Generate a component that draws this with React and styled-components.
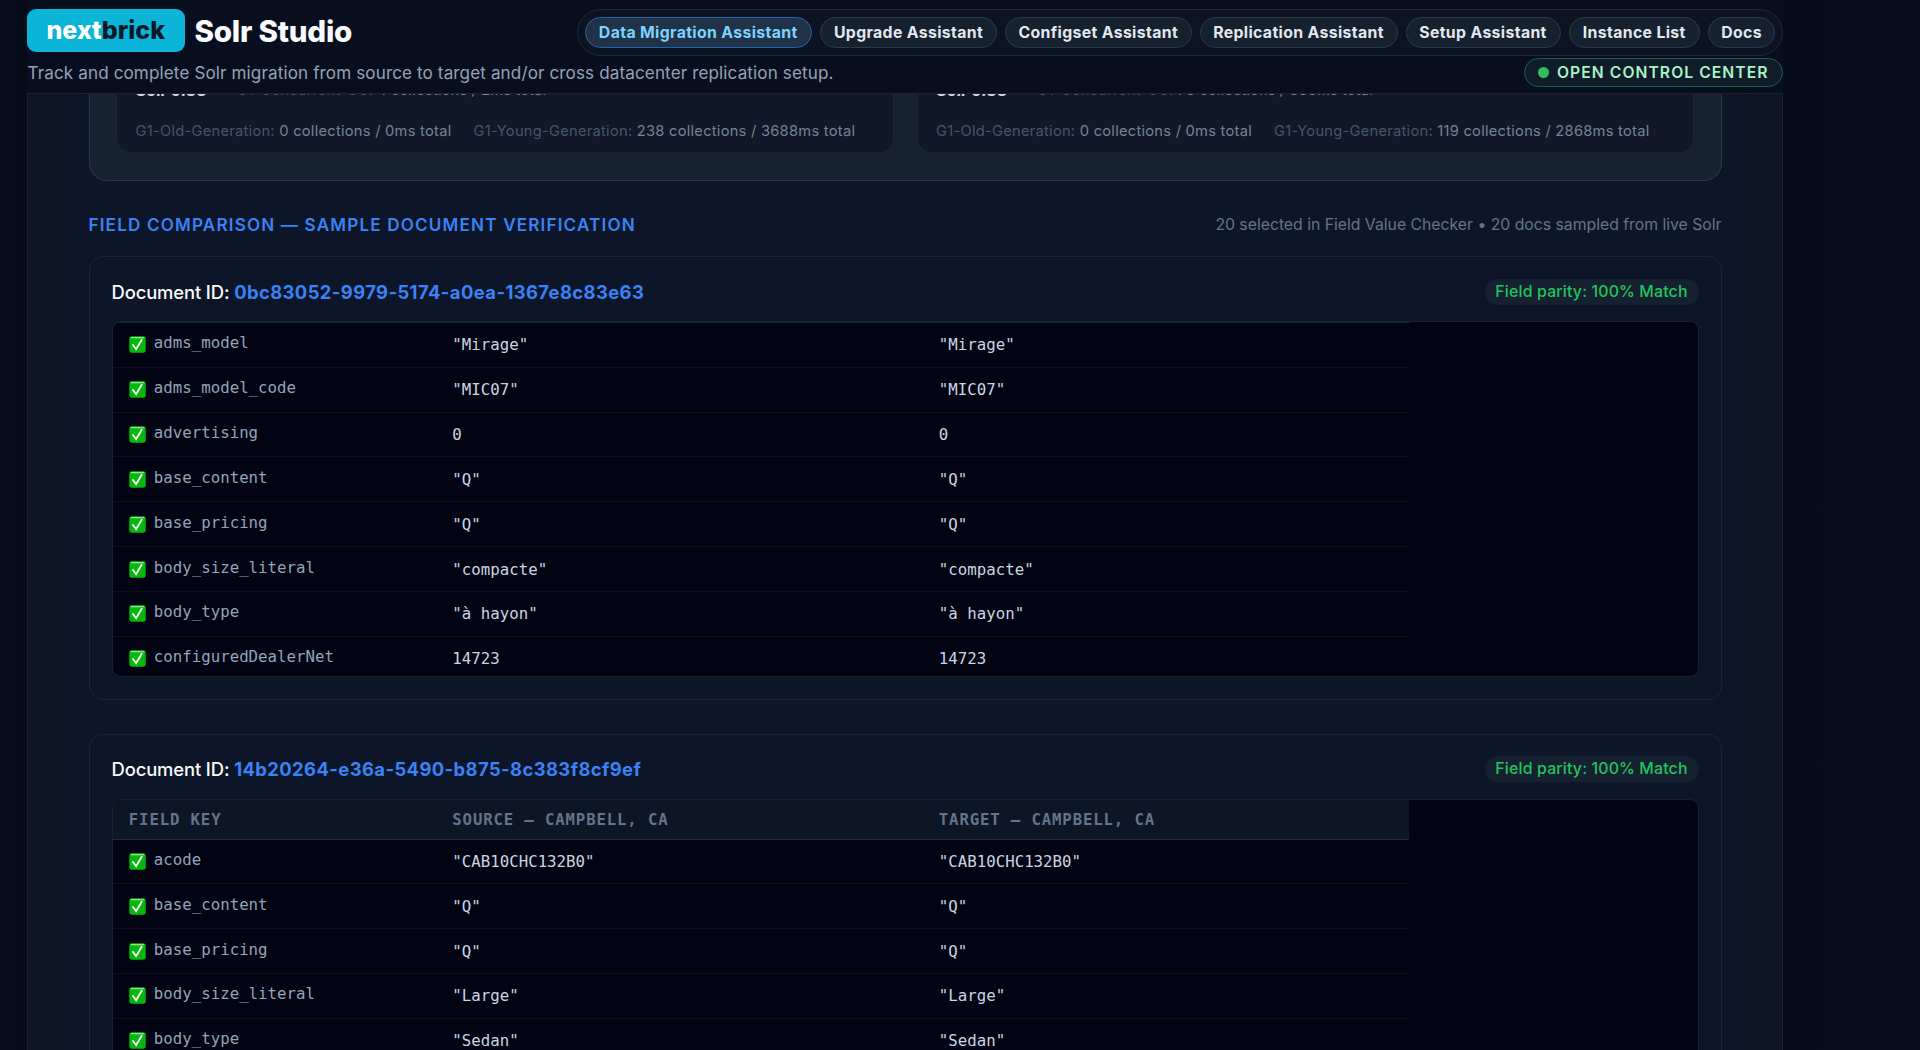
import React from 'react'
import styled, { createGlobalStyle } from 'styled-components'

const GlobalStyle = createGlobalStyle`
  * {
    box-sizing: border-box;
  }
  body {
    margin: 0;
    background: #060b17;
    font-family: Inter, 'Liberation Sans', sans-serif;
    color: #f1f5f9;
    overflow: hidden;
  }
`
const Page = styled.div`
  width: 1920px;
  height: 1050px;
  padding: 0 137px 0 27px;
  display: flex;
  flex-direction: column;
  overflow: hidden;
  background: linear-gradient(90deg, #080d1b 0, #060b18 27px, #060b18 1784px, #070c19 1830px, #070c19 100%);
`
const Header = styled.header`
  flex: none;
  height: 93px;
  padding-top: 9px;
  background: #090e1f;
`
const TopRow = styled.div`
  display: flex;
  justify-content: space-between;
  height: 46.5px;
`
const Brand = styled.div`
  display: flex;
  gap: 10px;
`
const Logo = styled.div`
  width: 157.5px;
  height: 43px;
  border-radius: 9px;
  background: #0ab5d8;
  color: #fff;
  font-size: 25px;
  font-weight: 800;
  line-height: 43px;
  text-align: center;
`
const LogoDark = styled.span`
  color: #0f172a;
`
const Title = styled.h1`
  margin: 0;
  font-size: 29.6px;
  font-weight: 800;
  line-height: 44px;
  letter-spacing: -0.25px;
  color: #f8fafc;
`
const Nav = styled.nav`
  display: flex;
  align-items: center;
  gap: 8px;
  padding: 0 7px;
  border: 1px solid #1c2a3a;
  border-radius: 24px;
  background: #0c1424;
`
const NavPill = styled.a`
  width: ${(props) => props.$width}px;
  height: 31.5px;
  line-height: 30px;
  text-align: center;
  white-space: nowrap;
  border: 1px solid ${(props) => (props.$active ? '#2563a8' : '#2a3a4b')};
  border-radius: 16px;
  background: ${(props) => (props.$active ? '#1f3248' : '#162130')};
  color: ${(props) => (props.$active ? '#7dd3fc' : '#e2e8f0')};
  font-size: 15.8px;
  font-weight: 700;
  letter-spacing: 0.36px;
`
const SubRow = styled.div`
  display: flex;
  justify-content: space-between;
  padding-top: 2.5px;
`
const Subtitle = styled.p`
  margin: 0;
  padding-left: 0.5px;
  font-size: 17.1px;
  line-height: 29px;
  letter-spacing: 0.11px;
  color: #94a3b8;
`
const ControlCenter = styled.button`
  display: flex;
  align-items: center;
  gap: 8px;
  width: 259px;
  height: 28.5px;
  padding: 0 13px;
  border: 1px solid #166540;
  border-radius: 15px;
  background: #111c2b;
  color: #a7f3c4;
  font-family: inherit;
  font-size: 15.7px;
  font-weight: 600;
  letter-spacing: 1.05px;
  white-space: nowrap;
`
const Dot = styled.span`
  flex: none;
  width: 11px;
  height: 11px;
  border-radius: 50%;
  background: #2fbf5c;
`
const Panel = styled.main`
  flex: 1;
  min-height: 0;
  overflow: hidden;
  padding: 0 60.5px;
  border: solid #1a2534;
  border-width: 1px 1px 0;
  background: linear-gradient(90deg, #0f1626 0, #0d1628 50px, #0d1628 1700px, #0f1626 100%);
`
const StatsSection = styled.section`
  display: flex;
  align-items: flex-end;
  gap: 23px;
  height: 86.5px;
  padding: 0 26.5px 27px;
  border: 1px solid #26364a;
  border-top: 0;
  border-radius: 0 0 18px 18px;
  background: #172230;
`
const StatsCard = styled.div`
  flex: 1;
  height: 58.5px;
  display: flex;
  flex-direction: column;
  justify-content: space-between;
  overflow: hidden;
  padding: 0 18.5px 10.5px;
  border: 1px solid #1a2534;
  border-top: 0;
  border-radius: 0 0 14px 14px;
  background: #101829;
`
const StatsLine = styled.div`
  display: flex;
  gap: 22px;
  font-size: 14.7px;
  line-height: 20px;
  letter-spacing: 0.25px;
  white-space: nowrap;
  color: #475569;
`
/* first line is scrolled half way under the header */
const ScrolledLine = styled(StatsLine)`
  gap: 26px;
  margin-top: -14px;
  letter-spacing: 0.12px;
`
const StatsValue = styled.span`
  color: #748397;
`
const SolrVersion = styled.strong`
  width: 75px;
  font-size: 16.5px;
  letter-spacing: -0.2px;
  color: #cbd5e1;
`
const SectionHead = styled.div`
  display: flex;
  justify-content: space-between;
  align-items: center;
  height: 75.5px;
  padding-top: 11.5px;
`
const SectionTitle = styled.h2`
  margin: 0;
  font-size: 17.1px;
  font-weight: 600;
  letter-spacing: 1.17px;
  color: #3b82f6;
`
const SectionNote = styled.span`
  font-size: 15.8px;
  letter-spacing: -0.02px;
  color: #64748b;
`
const DocCard = styled.article`
  height: 443.5px;
  margin-bottom: 34px;
  padding: 0 22px;
  border: 1px solid #1a2534;
  border-radius: 14px;
`
const DocHead = styled.div`
  display: flex;
  justify-content: space-between;
  align-items: center;
  height: 64px;
  padding-top: 5px;
`
const DocTitle = styled.h3`
  margin: 0;
  font-size: 18.4px;
  font-weight: 500;
  letter-spacing: -0.12px;
  color: #f8fafc;
`
const DocId = styled.span`
  font-weight: 700;
  letter-spacing: 0.41px;
  color: #3b82f6;
`
const Parity = styled.span`
  width: 214px;
  height: 26px;
  border-radius: 13px;
  background: #152130;
  color: #22c55e;
  font-size: 15.9px;
  font-weight: 500;
  line-height: 26px;
  letter-spacing: 0.15px;
  text-align: center;
`
const TableBox = styled.div`
  height: 356px;
  overflow: hidden;
  border: 1px solid #172231;
  border-radius: 9px;
  background: #020414;
  font-family: 'DejaVu Sans Mono', monospace;
`
const Row = styled.div`
  display: grid;
  grid-template-columns: 323.5px 486.5px 1fr;
  align-items: center;
  width: 1296.5px;
  height: 44.83px;
  padding-left: 16.3px;
  border-bottom: 1px solid #0c111f;
`
const HeadRow = styled(Row)`
  height: 40px;
  background: #0d1627;
  border-bottom: 1px solid #1b2c3c;
  color: #64748b;
  font-size: 15.7px;
  font-weight: 700;
  letter-spacing: 0.85px;
`
/* what is left of the header once the table is scrolled */
const HeadEdge = styled.div`
  width: 1296.5px;
  height: 1px;
  background: #182636;
`
const FieldKey = styled.span`
  display: flex;
  align-items: center;
  gap: 8px;
  font-size: 15.75px;
  color: #94a3b8;
`
const KeyText = styled.span`
  padding-bottom: 4px;
`
const Value = styled.span`
  font-size: 15.75px;
  color: #cbd5e1;
`

const CheckIcon = () => (
  <svg width="17" height="17" viewBox="0 0 17 17">
    <rect x="0.3" y="0.3" width="16.4" height="16.4" rx="2.6" fill="#07b80c" />
    <rect x="1.6" y="0.9" width="13.8" height="1.3" rx="0.6" fill="#8fe596" />
    <path d="M4 9l3.1 4.2 5.6-9.4" fill="none" stroke="#fff" strokeWidth="1.8" strokeLinecap="round" />
  </svg>
)

const navItems = [
  { label: 'Data Migration Assistant', width: 227.5, active: true },
  { label: 'Upgrade Assistant', width: 177 },
  { label: 'Configset Assistant', width: 186.5 },
  { label: 'Replication Assistant', width: 198 },
  { label: 'Setup Assistant', width: 155 },
  { label: 'Instance List', width: 131.5 },
  { label: 'Docs', width: 67 },
]

const stats = [
  { concurrent: '4 collections / 2ms total', old: '0 collections / 0ms total', young: '238 collections / 3688ms total' },
  { concurrent: '78 collections / 538ms total', old: '0 collections / 0ms total', young: '119 collections / 2868ms total' },
]

const documents = [
  {
    id: '0bc83052-9979-5174-a0ea-1367e8c83e63',
    fields: [
      ['adms_model', '"Mirage"'],
      ['adms_model_code', '"MIC07"'],
      ['advertising', '0'],
      ['base_content', '"Q"'],
      ['base_pricing', '"Q"'],
      ['body_size_literal', '"compacte"'],
      ['body_type', '"à hayon"'],
      ['configuredDealerNet', '14723'],
    ],
  },
  {
    id: '14b20264-e36a-5490-b875-8c383f8cf9ef',
    showHead: true,
    fields: [
      ['acode', '"CAB10CHC132B0"'],
      ['base_content', '"Q"'],
      ['base_pricing', '"Q"'],
      ['body_size_literal', '"Large"'],
      ['body_type', '"Sedan"'],
    ],
  },
]

const Document = ({ doc }) => (
  <DocCard>
    <DocHead>
      <DocTitle>Document ID: <DocId>{doc.id}</DocId></DocTitle>
      <Parity>Field parity: 100% Match</Parity>
    </DocHead>
    <TableBox>
      {doc.showHead ? (
        <HeadRow>
          <span>FIELD KEY</span>
          <span>SOURCE — CAMPBELL, CA</span>
          <span>TARGET — CAMPBELL, CA</span>
        </HeadRow>
      ) : (
        <HeadEdge />
      )}
      {doc.fields.map(([key, value]) => (
        <Row key={key}>
          <FieldKey><CheckIcon /><KeyText>{key}</KeyText></FieldKey>
          <Value>{value}</Value>
          <Value>{value}</Value>
        </Row>
      ))}
    </TableBox>
  </DocCard>
)

const App = () => {
  return (
    <Page>
      <GlobalStyle />
      <Header>
        <TopRow>
          <Brand>
            <Logo>next<LogoDark>brick</LogoDark></Logo>
            <Title>Solr Studio</Title>
          </Brand>
          <Nav>
            {navItems.map((item) => (
              <NavPill key={item.label} $width={item.width} $active={item.active}>{item.label}</NavPill>
            ))}
          </Nav>
        </TopRow>
        <SubRow>
          <Subtitle>Track and complete Solr migration from source to target and/or cross datacenter replication setup.</Subtitle>
          <ControlCenter><Dot />OPEN CONTROL CENTER</ControlCenter>
        </SubRow>
      </Header>
      <Panel>
        <StatsSection>
          {stats.map((stat) => (
            <StatsCard key={stat.young}>
              <ScrolledLine>
                <SolrVersion>Solr 9.88</SolrVersion>
                <span>G1-Concurrent-GC: <StatsValue>{stat.concurrent}</StatsValue></span>
              </ScrolledLine>
              <StatsLine>
                <span>G1-Old-Generation: <StatsValue>{stat.old}</StatsValue></span>
                <span>G1-Young-Generation: <StatsValue>{stat.young}</StatsValue></span>
              </StatsLine>
            </StatsCard>
          ))}
        </StatsSection>
        <SectionHead>
          <SectionTitle>FIELD COMPARISON — SAMPLE DOCUMENT VERIFICATION</SectionTitle>
          <SectionNote>20 selected in Field Value Checker • 20 docs sampled from live Solr</SectionNote>
        </SectionHead>
        {documents.map((doc) => (
          <Document key={doc.id} doc={doc} />
        ))}
      </Panel>
    </Page>
  )
}

export default App
